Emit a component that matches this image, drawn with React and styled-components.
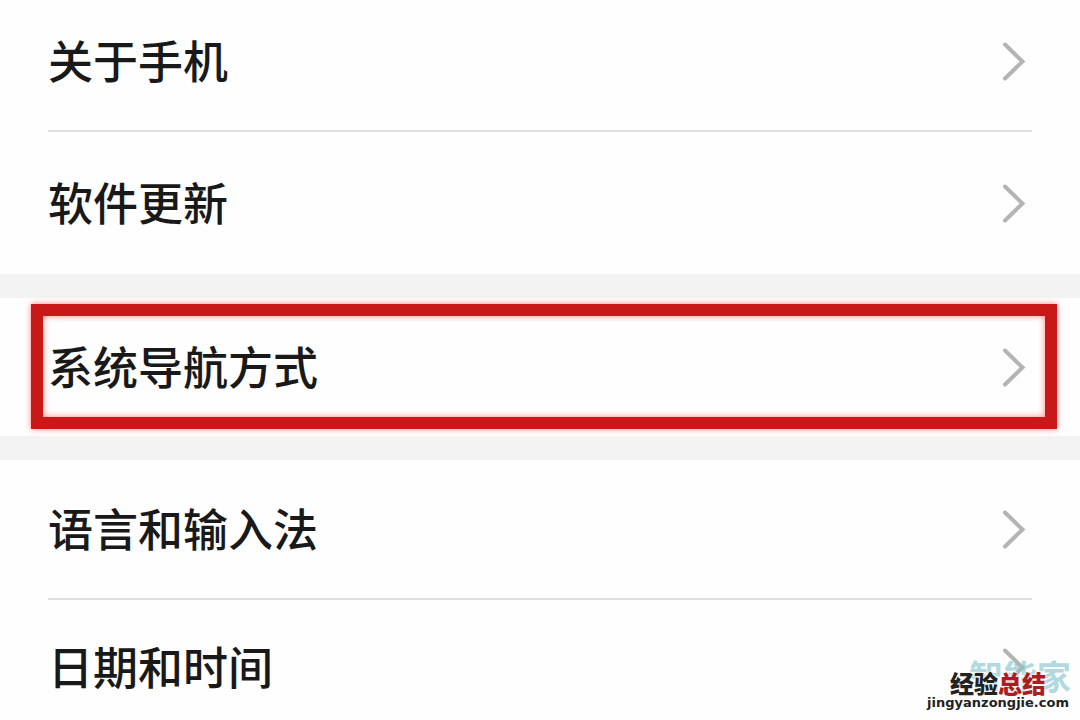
import React from 'react';
import styled, { createGlobalStyle } from 'styled-components';

const groups = [
  [
    { label: '关于手机', height: 138 },
    { label: '软件更新', height: 142 },
  ],
  [{ label: '系统导航方式', height: 138, highlighted: true }],
  [
    { label: '语言和输入法', height: 138 },
    { label: '日期和时间', height: 134 },
  ],
];

const Chevron = () => (
  <ChevronIcon viewBox='0 0 26 40' aria-hidden='true'>
    <path d='M4 3.5 L21.5 20.5 L4 37.5' />
  </ChevronIcon>
);

const App = () => {
  return (
    <Screen>
      <GlobalStyle />
      <Settings>
        {groups.map((items) => (
          <Group key={items[0].label}>
            {items.map((item) => (
              <Item key={item.label}>
                <Row type='button' $height={item.height}>
                  <Label>{item.label}</Label>
                  <Chevron />
                </Row>
                {item.highlighted && <HighlightFrame />}
              </Item>
            ))}
          </Group>
        ))}
      </Settings>
      <SourceMark>智能家</SourceMark>
      <SiteMark>
        <SiteName>
          经验<SiteAccent>总结</SiteAccent>
        </SiteName>
        <SiteUrl>jingyanzongjie.com</SiteUrl>
      </SiteMark>
    </Screen>
  );
};

export default App;

const GlobalStyle = createGlobalStyle`
  * {
    box-sizing: border-box;
  }

  body {
    margin: 0;
    background: #fefefe;
    font-family: 'Noto Sans CJK SC', sans-serif;
  }
`;

const Screen = styled.main`
  position: relative;
  height: 100vh;
  overflow: hidden;
`;

/* the list is scrolled a little past its top */
const Settings = styled.div`
  display: flex;
  flex-direction: column;
  gap: 24px;
  margin-top: -8px;
  background: #f3f3f3;
`;

const Group = styled.ul`
  margin: 0;
  padding: 0 48px;
  list-style: none;
  background: #fefefe;
`;

const Item = styled.li`
  position: relative;

  & + & {
    border-top: 2px solid #dfdfdf;
  }
`;

const Row = styled.button`
  display: flex;
  align-items: center;
  justify-content: space-between;
  width: 100%;
  height: ${({ $height }) => $height}px;
  padding: 0 5px 0 0;
  border: none;
  background: none;
  color: #191919;
  font-family: inherit;
  text-align: left;
  cursor: pointer;
`;

const Label = styled.span`
  padding-bottom: 2px;
  font-size: 45px;
  font-weight: 500;
  line-height: 64px;
`;

const ChevronIcon = styled.svg`
  width: 26px;
  height: 40px;
  fill: none;
  stroke: #b4b4b4;
  stroke-width: 4;
  stroke-linecap: round;
  stroke-linejoin: miter;
`;

const HighlightFrame = styled.div`
  position: absolute;
  inset: 6px -25px 7px -17px;
  border: 12px solid #c81818;
  box-shadow:
    0 0 6px rgba(255, 40, 40, 0.6),
    inset 0 0 6px rgba(255, 40, 40, 0.6);
  pointer-events: none;
`;

const SourceMark = styled.div`
  position: absolute;
  right: 9px;
  bottom: 24px;
  color: rgba(125, 192, 202, 0.6);
  font-size: 34px;
  font-weight: 700;
  line-height: 40px;
`;

const SiteMark = styled.div`
  position: absolute;
  right: 11px;
  bottom: 9px;
  display: flex;
  flex-direction: column;
  align-items: center;
  color: #222;
  text-shadow:
    0 0 2px #fff,
    0 0 3px #fff;
`;

const SiteName = styled.div`
  font-size: 24px;
  font-weight: 900;
  line-height: 24px;
`;

const SiteAccent = styled.span`
  color: #a91e22;
`;

const SiteUrl = styled.div`
  font-family: 'DejaVu Sans', sans-serif;
  font-size: 13px;
  font-weight: 700;
  line-height: 16px;
`;
